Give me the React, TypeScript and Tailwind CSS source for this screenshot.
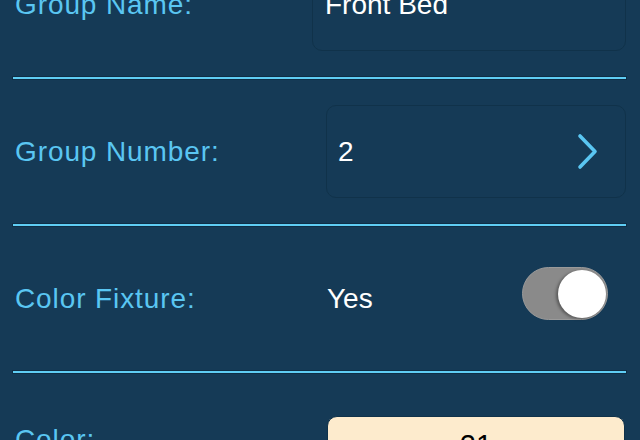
import React from "react";

const labelCls =
  "w-[297px] shrink-0 text-[28px] leading-[32px] tracking-[0.9px] text-[#5ac6f2] font-['Liberation_Sans',Arial,sans-serif]";
const valueCls =
  "text-[28px] leading-[32px] text-white font-['Liberation_Sans',Arial,sans-serif]";

function Divider() {
  return (
    <div className="ml-[13px] mr-[14px] h-[2px] bg-[#5fcdf4] shadow-[0_0_0_1px_#0f2e45]" />
  );
}

function Chevron() {
  return (
    <svg width="22" height="37" viewBox="0 0 22 37" fill="none">
      <path
        d="M3 3 L18 18.5 L3 34"
        stroke="#5ac6f2"
        strokeWidth="3.6"
        strokeLinecap="round"
        strokeLinejoin="round"
      />
    </svg>
  );
}

export default function App() {
  return (
    <div className="w-[640px] h-[440px] overflow-hidden bg-[#153a56]">
      <div className="-mt-[68px] flex flex-col">
        {/* Group Name */}
        <div className="h-[145px] flex items-center pl-[15px] pr-[14px]">
          <div className={labelCls}>Group Name:</div>
          <div className="flex-1 h-[93px] rounded-[10px] border border-[#10324a] flex items-center pl-[12px]">
            <span className={valueCls}>Front Bed</span>
          </div>
        </div>
        <Divider />
        {/* Group Number */}
        <div className="h-[145px] flex items-center pl-[15px] pr-[14px]">
          <div className={labelCls}>Group Number:</div>
          <div className="ml-[14px] flex-1 h-[93px] rounded-[10px] border border-[#10324a] flex items-center justify-between pl-[11px] pr-[26px]">
            <span className={valueCls}>2</span>
            <Chevron />
          </div>
        </div>
        <Divider />
        {/* Color Fixture */}
        <div className="h-[145px] flex items-center pl-[15px] pr-[14px]">
          <div className={labelCls}>Color Fixture:</div>
          <div className="ml-[15px] flex-1 flex items-center justify-between pr-[18px]">
            <span className={valueCls}>Yes</span>
            <div className="mb-[10px] w-[86px] h-[53px] rounded-full bg-[#8a8a8a] border border-[#9a9a9a] flex items-center justify-end pr-[1px]">
              <div className="w-[48px] h-[48px] rounded-full bg-white shadow-[-2px_1px_3px_rgba(0,0,0,0.35)]" />
            </div>
          </div>
        </div>
        <Divider />
        {/* Color */}
        <div className="h-[145px] flex items-start pl-[15px] pr-[15px]">
          <div className={labelCls + " mt-[51px]"}>Color:</div>
          <div className="ml-[15px] mt-[43px] flex-1 h-[93px] rounded-[10px] bg-[#fdebcd] border border-[#10324a] flex justify-center pt-[12px]">
            <span className="text-[29px] leading-[32px] text-black font-['Liberation_Sans',Arial,sans-serif]">
              21
            </span>
          </div>
        </div>
      </div>
    </div>
  );
}
